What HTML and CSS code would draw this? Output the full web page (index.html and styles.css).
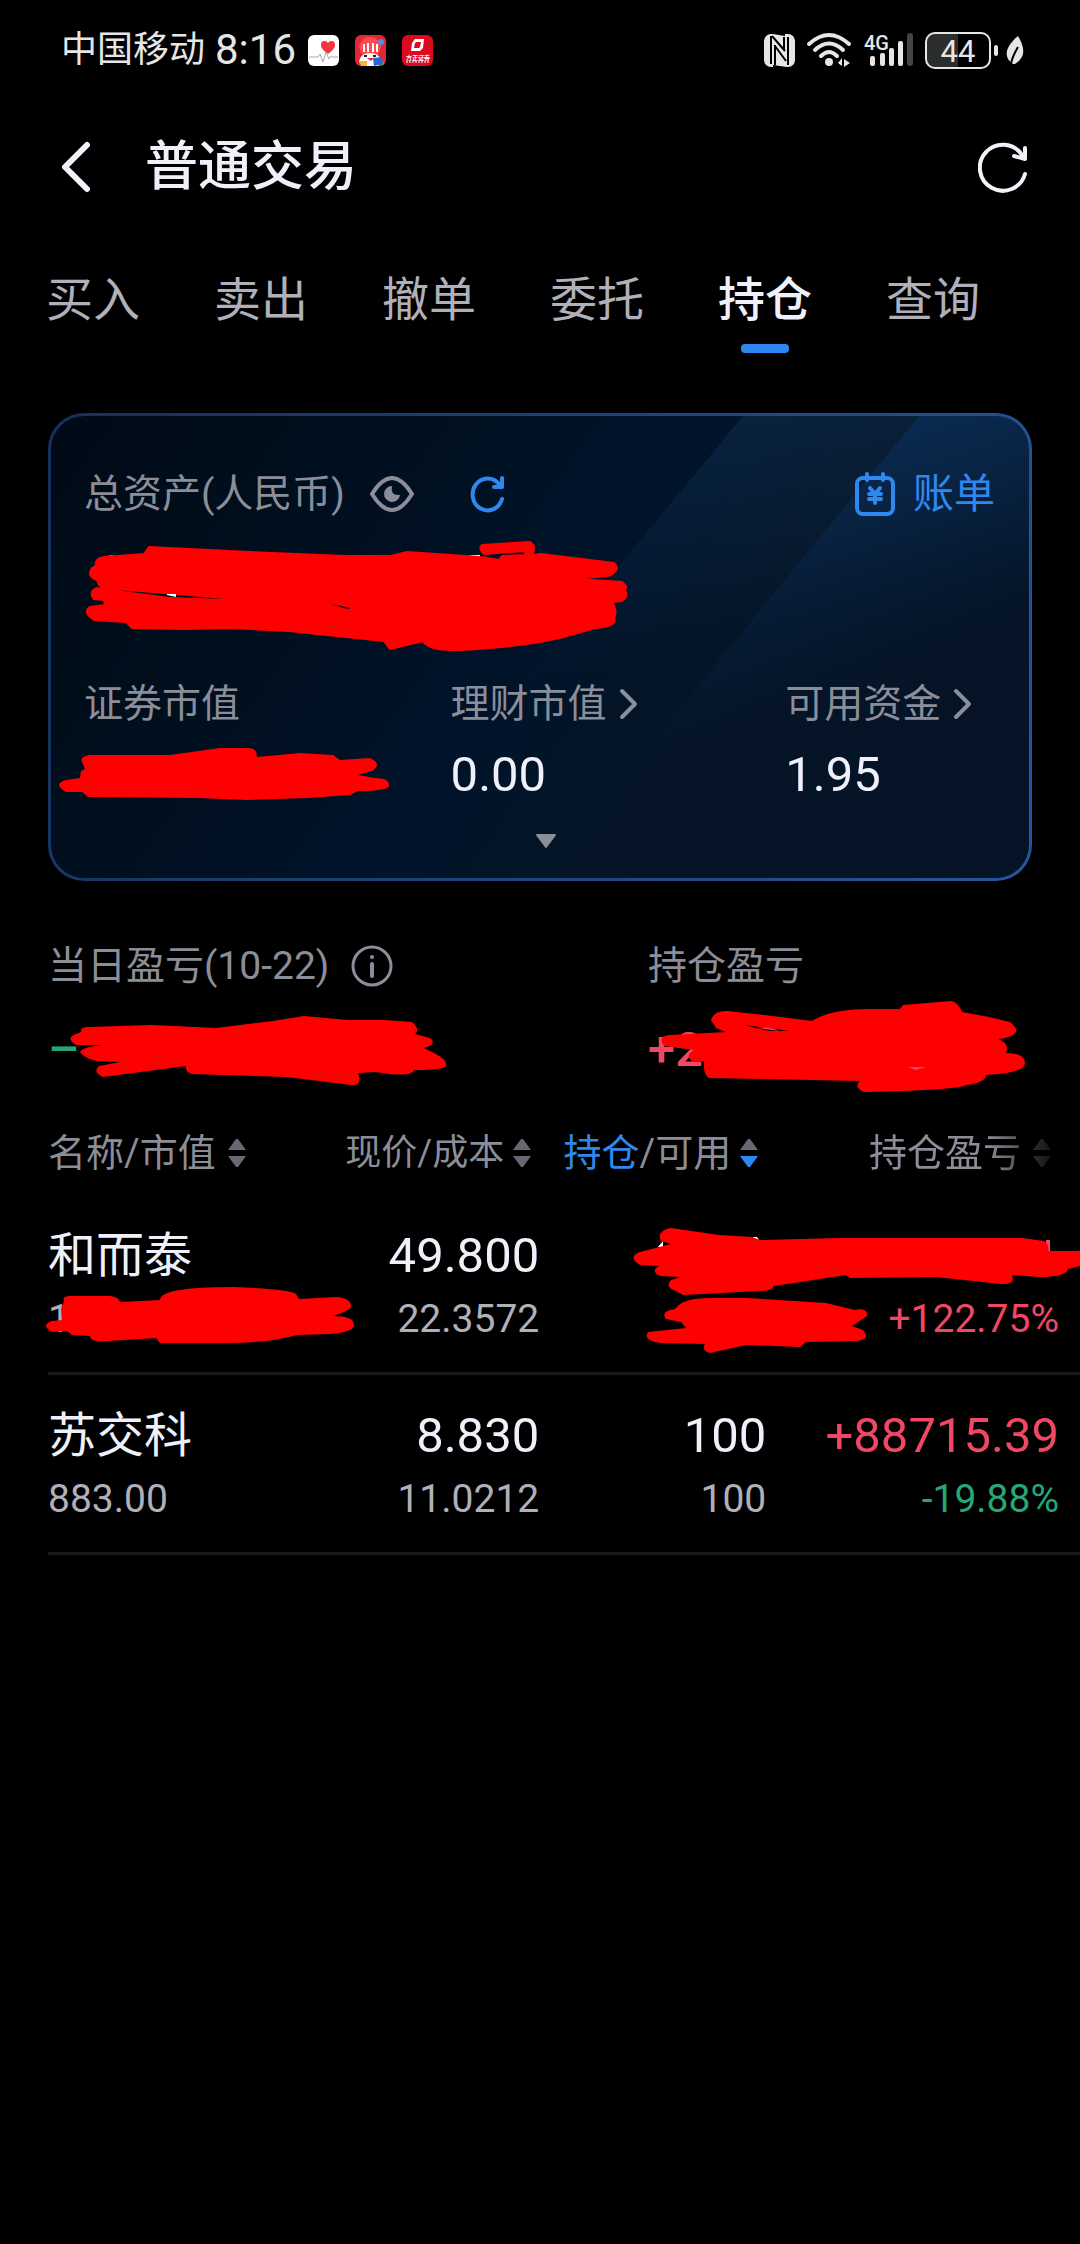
FILE: index.html
```html
<!DOCTYPE html>
<html lang="zh-CN">
<head>
  <meta charset="UTF-8">
  <meta name="viewport" content="width=device-width, initial-scale=1.0">
  <title>普通交易</title>
  <link rel="stylesheet" href="styles.css">
</head>
<body>
  <div class="status-bar">
    <span class="carrier">中国移动</span>
    <span class="clock">8:16</span>
    <div class="apps">
      <svg width="31" height="31" viewBox="0 0 31 31">
        <rect width="31" height="31" rx="6" fill="#fff"/>
        <path d="M20 19c-4-3-7-5.500-7-9a3.700 3.700 0 0 1 7-2 3.700 3.700 0 0 1 7 2c0 3.500-3 6-7 9z" fill="#f5363c"/>
        <path d="M1 22h9l2-3 3 8 3-10 3 7 2-3 2 1h5" fill="none" stroke="#aaa" stroke-width="1"/>
      </svg>
      <svg width="31" height="31" viewBox="0 0 31 31">
        <rect width="31" height="31" rx="6" fill="#e32636"/>
        <path d="M4 12C6 3 11 2 15 2s9 2 11 10l-3 8H7z" fill="#ff4a52"/>
        <path d="M9 9v8M13 8v9M18 8v9M22 9v8" stroke="#fff" stroke-width="2"/>
        <path d="M4 27c1-6 5-9 11-9s10 3 12 9l-4 4H8z" fill="#fff"/>
        <path d="M9 21h3M18 21h3" stroke="#222" stroke-width="2"/>
        <path d="M12 23h7l-3 3z" fill="#e32636"/>
        <path d="M4 26h8v5H6z" fill="#f7b52c"/>
        <path d="M18 23l9-1 1 7-9 2z" fill="#2369d8"/>
        <circle cx="26" cy="7" r="3" fill="#4c8fe6"/>
        <path d="M29 25v4l-3 2z" fill="#35b558"/>
      </svg>
      <svg width="31" height="31" viewBox="0 0 31 31">
        <rect width="31" height="31" rx="6" fill="#dc0a1e"/>
        <path d="M13 4h9l-1 9-3 3H9l1-8z" fill="#fff"/>
        <path d="M14 7h5l-1 5-1 1h-5l1-5z" fill="#dc0a1e"/>
        <text x="4" y="25" class="app-name">方正证券</text>
        <path d="M4 27h23" stroke="#fff" stroke-dasharray="2 1"/>
      </svg>
    </div>
    <div class="system">
      <svg width="31" height="33" viewBox="0 0 31 33">
        <rect width="31" height="33" rx="7" fill="#e6e6e6"/>
        <path d="M7 2v28M11 11v20M11 12l11 15M8 2l13 15M20 3v13M24 3v28" fill="none" stroke="#000" stroke-width="2"/>
        <path d="M9 31l14 2H9zM9 0h12v2z"/>
      </svg>
      <svg width="44" height="34" viewBox="0 0 44 34" fill="none" stroke="#e6e6e6" stroke-width="4" stroke-linecap="round">
        <path d="M2 11Q22-7 42 11M8 17Q22 4 36 17M14 23Q22 15 30 23"/>
        <circle cx="22" cy="29" r="4" fill="#e6e6e6" stroke="none"/>
        <path d="M31 30l4-5v8zM37 26v8l6-4z" fill="#e6e6e6" stroke="none"/>
      </svg>
      <svg width="50" height="34" viewBox="0 0 50 34">
        <g fill="#e6e6e6">
          <rect x="7" y="23" width="5" height="10" rx="2"/>
          <rect x="17" y="20" width="5" height="13" rx="2"/>
          <rect x="26" y="15" width="5" height="18" rx="2"/>
          <rect x="35" y="8" width="5" height="25" rx="2"/>
        </g>
        <rect x="44" y="0" width="6" height="33" rx="3" fill="#444"/>
        <text x="1" y="17" class="net-type">4G</text>
      </svg>
      <svg width="73" height="37" viewBox="0 0 73 37">
        <path d="M10 1h23v34H10q-8 0-8-8V9q0-8 8-8z" fill="#2c2e2d"/>
        <rect x="1" y="1" width="64" height="35" rx="9" fill="none" stroke="#e6e6e6" stroke-width="2"/>
        <rect x="69" y="13" width="4" height="11" rx="2" fill="#e6e6e6"/>
        <text x="33" y="30" text-anchor="middle" class="battery-level">44</text>
      </svg>
      <svg class="leaf" width="18" height="30" viewBox="0 0 18 30">
        <path d="M12 1c7 12 8 21-3 28H7C-3 22-1 12 12 1z" fill="#e6e6e6"/>
        <path d="M12 12C9 17 6 22 5 29" fill="none" stroke="#000" stroke-width="2"/>
      </svg>
    </div>
  </div>

  <header class="title-bar">
    <button class="icon-btn" aria-label="返回">
      <svg width="32" height="52" viewBox="0 0 32 52" fill="none" stroke="#f2f2fa" stroke-width="6" stroke-linecap="round" stroke-linejoin="round"><path d="M27 4L5 26l22 22"/></svg>
    </button>
    <h1>普通交易</h1>
    <button class="icon-btn" aria-label="刷新">
      <svg width="50" height="52" viewBox="0 0 50 52" fill="none" stroke="#f2f2fa" stroke-width="4" stroke-linecap="round" stroke-linejoin="round"><path d="M47 33A23 23 0 1 1 44 14L46 17M47 7V18L36 15"/></svg>
    </button>
  </header>

  <nav class="tabs">
    <button class="tab">买入</button>
    <button class="tab">卖出</button>
    <button class="tab">撤单</button>
    <button class="tab">委托</button>
    <button class="tab active">持仓</button>
    <button class="tab">查询</button>
  </nav>

  <section class="card">
    <svg class="card-shine" viewBox="0 0 978 462" preserveAspectRatio="xMaxYMin slice">
      <defs>
        <linearGradient id="shine1" gradientUnits="userSpaceOnUse" x1="720" y1="0" x2="770" y2="200">
          <stop offset="0" stop-color="#1c4a7c" stop-opacity=".25"/>
          <stop offset="1" stop-color="#1c4a7c" stop-opacity="0"/>
        </linearGradient>
        <linearGradient id="shine2" gradientUnits="userSpaceOnUse" x1="870" y1="0" x2="950" y2="210">
          <stop offset="0" stop-color="#0b3c7c" stop-opacity=".35"/>
          <stop offset="1" stop-color="#0b3c7c" stop-opacity="0"/>
        </linearGradient>
      </defs>
      <path d="M692 0H978V462H310z" fill="url(#shine1)"/>
      <path d="M868 0H978V462H490z" fill="url(#shine2)"/>
    </svg>
    <div class="card-head">
      <span>总资产(人民币)</span>
      <button class="icon-btn eye" aria-label="隐藏金额">
        <svg width="44" height="36" viewBox="0 0 44 36"><path d="M2 18Q12 2 22 2t20 16Q32 34 22 34T2 18z" fill="none" stroke="#8b8e99" stroke-width="4" stroke-linejoin="round"/><path d="M22 10a8 8 0 1 0 8 9q-10 1-8-9z" fill="#8b8e99"/></svg>
      </button>
      <button class="icon-btn reload" aria-label="刷新资产">
        <svg width="34" height="38" viewBox="0 0 34 38" fill="none" stroke="#2f88f0" stroke-width="4" stroke-linecap="round" stroke-linejoin="round"><path d="M32 24A15 16 0 1 1 29 9L32 12M32 3v9H24"/></svg>
      </button>
      <a class="bill" href="#bill">
        <svg width="40" height="44" viewBox="0 0 40 44" fill="none" stroke="#2f88f0" stroke-width="4" stroke-linecap="round" stroke-linejoin="round"><rect x="2" y="6" width="36" height="36" rx="6"/><path d="M12 2v6M28 2v6M15 16l5 6 5-6M20 22v9M14 22h12M14 27h12" stroke-width="4"/></svg>
        账单
      </a>
    </div>
    <div class="total">
      <svg class="mark mark-total" width="544" height="114" viewBox="85 539 544 114">
        <path class="peek" d="M107 556l7-1-4 2zM92 568l4-3v4zM468 555h12v3z"/>
        <path d="M149 547L250 552 346 556 391 556 407 552 480 557 499 560 502 556 526 555 524 551 484 554Q478 549 482 545L530 542Q537 546 532 555L541 554 614 563Q622 570 608 576L576 579 622 582Q628 586 625 590 629 596 622 601L612 602 Q618 612 614 618 618 626 595 628L560 638 534 643 Q480 650 453 650 428 650 423 641L390 649 384 641 289 631 231 628 185 629 132 628 126 622 94 620Q82 612 90 607L105 605 104 600 94 599Q88 592 97 588L105 589 99 585 97 580Q86 576 92 568L96 567Q94 558 105 557L144 554z" stroke="#f00" stroke-width="2" stroke-linejoin="round"/>
        <path class="gap" d="M116 590L224 599 170 597z"/>
        <path class="gap" d="M331 604L351 608 347 609z"/>
        <path class="peek" d="M167 594h9v3l-9-2z"/>
      </svg>
    </div>
    <div class="card-grid">
      <div class="figure">
        <span>证券市值</span>
        <strong class="hidden-value">
          <svg class="mark mark-market" width="334" height="56" viewBox="58 746 334 56">
            <path d="M82 762Q80 756 90 755L170 755 220 748 248 748Q257 748 257 757L300 753 333 755 340 760 370 758Q383 764 372 771L358 775 375 778Q390 778 389 786 388 791 358 791L350 795 308 798 247 800 197 798 88 797 82 792 66 792Q52 784 66 780L80 778 81 771 85 769z"/>
          </svg>
        </strong>
      </div>
      <div class="figure">
        <a href="#finance">理财市值 <svg width="20" height="32" viewBox="0 0 20 32" class="chevron"><path d="M3 3l13 13L3 29"/></svg></a>
        <strong>0.00</strong>
      </div>
      <div class="figure">
        <a href="#funds">可用资金 <svg width="20" height="32" viewBox="0 0 20 32" class="chevron"><path d="M3 3l13 13L3 29"/></svg></a>
        <strong>1.95</strong>
      </div>
    </div>
    <button class="icon-btn expand" aria-label="展开">
      <svg width="22" height="15" viewBox="0 0 22 15"><path d="M2 1h18L11 13z" fill="#8b8e99" stroke="#8b8e99" stroke-width="2" stroke-linejoin="round"/></svg>
    </button>
  </section>

  <section class="profit">
    <div class="figure">
      <span class="with-info">当日盈亏(10-22)
        <button class="icon-btn" aria-label="说明">
          <svg width="42" height="42" viewBox="0 0 42 42" fill="none" stroke="#8b8e99" stroke-width="3"><circle cx="21" cy="21" r="19"/><path d="M21 19v12" stroke-width="4" stroke-linecap="round"/><circle cx="21" cy="12" r="2" fill="#8b8e99" stroke="none"/></svg>
        </button>
      </span>
      <strong class="down hidden-value">–
        <svg class="mark mark-day" width="382" height="74" viewBox="67 1014 382 74">
          <path d="M81 1032Q80 1027 88 1027L152 1025 216 1028 273 1021 304 1016 348 1020 385 1020 412 1022Q421 1030 415 1034L430 1038Q438 1044 424 1048L434 1053Q448 1060 446 1066 444 1070 414 1070 412 1078 375 1072L358 1073Q363 1086 351 1085L287 1077 192 1074Q185 1072 186 1066L103 1077Q92 1072 99 1066L120 1062 96 1061Q84 1058 80 1052 82 1047 103 1045L76 1045Q65 1038 76 1034z"/>
        </svg>
      </strong>
    </div>
    <div class="figure">
      <span>持仓盈亏</span>
      <strong class="up hidden-value">+2
        <svg class="mark mark-hold" width="370" height="96" viewBox="658 999 370 96">
          <path d="M711 1020Q714 1010 728 1011L781 1017 812 1021Q830 1009 871 1009L900 1009 903 1005 951 1001Q958 1002 962 1012L989 1017 1010 1022Q1027 1035 998 1039 1010 1043 1006 1053 1025 1053 1025 1063 1025 1073 986 1075 985 1083 966 1085 960 1090 864 1092Q853 1087 860 1081L709 1078Q703 1075 704 1061L693 1062Q684 1056 694 1050L664 1046Q657 1036 670 1035L726 1032 716 1028z"/>
          <path class="gap-dark" d="M743 1025L790 1031 770 1031z"/>
          <path class="peek-up" d="M758 1028q12-2 21 3z"/>
          <path class="peek-up" d="M908 1067h18l-10 3z"/>
        </svg>
      </strong>
    </div>
  </section>

  <table class="holdings">
    <colgroup><col class="col-name"><col class="col-price"><col class="col-qty"><col class="col-profit"></colgroup>
    <thead>
      <tr>
        <th><button class="sort">名称/市值 <svg width="18" height="28" viewBox="0 0 18 28"><path class="arrow" d="M0 11L8 0h2l8 11zM0 17L8 28h2l8-11z"/></svg></button></th>
        <th><button class="sort small">现价/成本 <svg width="18" height="28" viewBox="0 0 18 28"><path class="arrow" d="M0 11L8 0h2l8 11zM0 17L8 28h2l8-11z"/></svg></button></th>
        <th><button class="sort"><span><b>持仓</b>/可用</span> <svg width="18" height="28" viewBox="0 0 18 28"><path class="arrow" d="M0 11L8 0h2l8 11z"/><path class="arrow on" d="M0 17L8 28h2l8-11z"/></svg></button></th>
        <th><button class="sort fade">持仓盈亏 <svg width="18" height="28" viewBox="0 0 18 28"><path class="arrow" d="M0 11L8 0h2l8 11zM0 17L8 28h2l8-11z"/></svg></button></th>
      </tr>
    </thead>
    <tbody>
      <tr>
        <td>
          <span class="main">和而泰</span>
          <span class="sub hidden-value">1
            <svg class="mark mark-value" width="312" height="60" viewBox="45 1284 312 60">
              <path d="M64 1300Q62 1295 70 1295L110 1295Q119 1296 120 1301L160 1299Q160 1286 233 1286 290 1288 296 1293L299 1298 336 1296Q351 1297 351 1305 350 1310 333 1315 354 1315 354 1324 354 1331 330 1333L297 1334Q270 1342 226 1342L160 1342 156 1337 108 1340Q90 1342 90 1335L72 1334 67 1330 52 1331Q40 1324 52 1320L62 1319 61 1308z"/>
            </svg>
          </span>
        </td>
        <td><span class="main">49.800</span><span class="sub">22.3572</span></td>
        <td>
          <span class="main hidden-value">&nbsp;
            <svg class="mark mark-qty" width="450" height="72" viewBox="630 1225 450 72">
              <path class="peek" d="M658 1246l5-6v6zM753 1236h4l2 3h-6z"/>
              <path class="peek-up" d="M1046 1239h4v11h-4z"/>
              <path d="M661 1240Q656 1230 671 1227L719 1234 752 1236 760 1239 840 1237 1022 1237 1044 1240Q1050 1244 1048 1250L1080 1250V1265L1068 1268Q1066 1276 1040 1276L1012 1274Q1016 1284 1001 1283L936 1276 850 1277 846 1274 774 1285Q772 1290 760 1290L683 1294 676 1290Q664 1286 671 1279L681 1276 660 1275Q650 1270 659 1265L640 1264Q627 1256 640 1251L671 1243z"/>
            </svg>
          </span>
          <span class="sub hidden-value">&nbsp;
            <svg class="mark mark-avail" width="226" height="60" viewBox="644 1294 226 60">
              <path d="M666 1318Q660 1310 675 1308 682 1297 710 1297L747 1297 826 1302 855 1309Q868 1306 867 1315L852 1325 863 1329Q871 1338 858 1340L806 1341 800 1346 746 1344 710 1352Q701 1349 705 1343L660 1342Q642 1339 648 1331L686 1327 681 1321z"/>
            </svg>
          </span>
        </td>
        <td><span class="main">&nbsp;</span><span class="sub up">+122.75%</span></td>
      </tr>
      <tr>
        <td><span class="main">苏交科</span><span class="sub">883.00</span></td>
        <td><span class="main">8.830</span><span class="sub">11.0212</span></td>
        <td><span class="main">100</span><span class="sub">100</span></td>
        <td><span class="main up">+88715.39</span><span class="sub down">-19.88%</span></td>
      </tr>
    </tbody>
  </table>
</body>
</html>
```
FILE: styles.css
```css
:root {
  --text: #f0f0fa;
  --muted: #8b8e99;
  --sub: #b0b0ba;
  --blue: #2f88f0;
  --up: #f04864;
  --down: #26a875;
  --line: #151b1b;
}

* {
  margin: 0;
  padding: 0;
  box-sizing: border-box;
}

body {
  min-height: 100vh;
  background-color: #000;
  color: var(--text);
  font-family: Roboto, "Noto Sans CJK SC", sans-serif;
  font-size: 39px;
  line-height: 60px;
  overflow-x: hidden;
}

button {
  border: none;
  background: none;
  color: inherit;
  font: inherit;
  cursor: pointer;
}

a {
  color: inherit;
  text-decoration: none;
}

svg {
  display: block;
  flex-shrink: 0;
}

.icon-btn {
  display: flex;
}

/* status bar */
.status-bar {
  display: flex;
  align-items: center;
  height: 100px;
  padding: 0 56px 0 61px;
  color: #e6e6e6;
}

.carrier {
  font-size: 36px;
}

.clock {
  margin-left: 10px;
  font-size: 42px;
}

.apps {
  display: flex;
  gap: 16px;
  margin-left: 12px;
}

.app-name {
  fill: #fff;
  font-size: 6px;
  font-weight: 700;
}

.system {
  display: flex;
  align-items: center;
  gap: 12px;
  margin-left: auto;
}

.system svg {
  overflow: visible;
}

.leaf {
  margin-left: -4px;
}

.net-type {
  fill: #e6e6e6;
  font-size: 20px;
  font-weight: 500;
}

.battery-level {
  fill: #e6e6e6;
  font-size: 31px;
}

/* title and tabs */
.title-bar {
  display: flex;
  align-items: center;
  height: 128px;
  padding: 5px 52px 0 60px;
}

.title-bar h1 {
  flex: 1;
  margin-left: 53px;
  font-size: 53px;
  font-weight: 500;
}

.tabs {
  display: flex;
  justify-content: space-between;
  padding: 42px 100px 0 46px;
}

.tab {
  display: flex;
  flex-direction: column;
  align-items: center;
  gap: 14px;
  color: var(--sub);
  font-size: 47px;
}

.tab::after {
  content: "";
  width: 48px;
  height: 9px;
  border-radius: 4px;
}

.tab.active {
  color: var(--text);
  font-weight: 500;
}

.tab.active::after {
  background-color: var(--blue);
}

/* asset card */
.card {
  position: relative;
  margin: 60px 48px 0;
  padding: 48px 34px 29px 33px;
  border: 3px solid transparent;
  border-radius: 36px;
  background:
    linear-gradient(125deg, #000a16 0%, #000f1e 25%, #001329 48%, #051527 65%, #041426 100%) padding-box,
    linear-gradient(110deg, #15305a, #26569a) border-box;
  color: var(--muted);
}

.card-shine {
  position: absolute;
  inset: 0;
  width: 100%;
  height: 100%;
  border-radius: 33px;
}

.card-head,
.card-grid,
.expand {
  position: relative;
}

.card-head {
  display: flex;
  align-items: center;
}

.eye {
  margin-left: 25px;
}

.reload {
  margin-left: 56px;
}

.bill {
  display: flex;
  align-items: center;
  gap: 18px;
  margin-left: auto;
  color: var(--blue);
  font-size: 41px;
}

.total {
  position: relative;
  height: 150px;
}

.card-grid {
  display: grid;
  grid-template-columns: 367fr 335fr 210fr;
}

.figure {
  display: flex;
  flex-direction: column;
  gap: 11px;
}

.figure span,
.figure a {
  display: flex;
  align-items: center;
  gap: 12px;
  white-space: nowrap;
}

.figure .with-info {
  gap: 22px;
}

.figure strong {
  min-height: 60px;
  color: var(--text);
  font-size: 49px;
  font-weight: 400;
}

.chevron {
  fill: none;
  stroke: var(--muted);
  stroke-width: 4px;
  stroke-linecap: round;
  stroke-linejoin: round;
}

.expand {
  margin: 29px auto 0;
  padding-left: 12px;
  width: 34px;
}

/* profit summary */
.profit {
  display: grid;
  grid-template-columns: 600fr 384fr;
  margin: 55px 48px 0;
  color: var(--muted);
}

.profit .figure {
  gap: 24px;
}

.profit strong {
  font-weight: 500;
}

.figure .up,
.up {
  color: var(--up);
}

.figure .down,
.down {
  color: var(--down);
}

/* strokes drawn over private amounts */
.hidden-value {
  position: relative;
}

.mark {
  position: absolute;
  z-index: 1;
  fill: #f00;
}

.mark .gap {
  fill: #00101f;
}

.mark .gap-dark {
  fill: #000;
}

.mark .peek {
  fill: #fff;
}

.mark .peek-up {
  fill: var(--up);
}

.mark-total {
  left: 1px;
  top: 15px;
}

.mark-market {
  left: -26px;
  top: 1px;
}

.mark-day {
  left: 19px;
  top: -6px;
}

.mark-hold {
  left: 10px;
  top: -21px;
}

.mark-value {
  left: -3px;
  top: -4px;
}

.mark-qty {
  right: -314px;
  top: 0;
}

.mark-avail {
  right: -104px;
  top: 6px;
}

/* holdings */
.holdings {
  width: calc(100% - 48px);
  margin: 31px 0 0 48px;
  border-spacing: 0;
  table-layout: fixed;
}

.col-name {
  width: 24%;
}

.col-price {
  width: 23.6%;
}

.col-qty {
  width: 22%;
}

.holdings th {
  height: 84px;
  padding-right: 8px;
  color: var(--muted);
  font-weight: 400;
}

.holdings th:last-child {
  padding-right: 29px;
}

.sort {
  display: flex;
  align-items: center;
  gap: 9px;
  margin-left: auto;
  font-size: 38px;
  white-space: nowrap;
}

th:first-child .sort {
  gap: 12px;
  margin-left: 0;
}

.sort.small {
  font-size: 36px;
}

.sort b {
  color: var(--blue);
  font-weight: 400;
}

.sort.fade {
  gap: 12px;
  -webkit-mask-image: linear-gradient(to right, #000 65%, rgba(0, 0, 0, .2));
  mask-image: linear-gradient(to right, #000 65%, rgba(0, 0, 0, .2));
}

.arrow {
  fill: #666874;
}

.arrow.on {
  fill: var(--blue);
}

.holdings td {
  height: 180px;
  padding: 31px 0 23px;
  border-bottom: 3px solid var(--line);
  text-align: right;
  vertical-align: top;
}

.holdings td:first-child {
  text-align: left;
}

.holdings td:last-child {
  padding-right: 21px;
}

.main,
.sub {
  display: block;
}

.main {
  margin-bottom: 3px;
  font-size: 49px;
}

td:first-child .main {
  font-size: 48px;
}

.sub {
  color: var(--sub);
  font-size: 39px;
}

.sub.up {
  color: var(--up);
}

.sub.down {
  color: var(--down);
}
```
